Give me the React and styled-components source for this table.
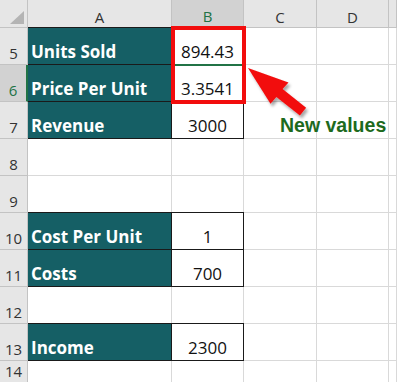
import React from "react";
import styled, { createGlobalStyle, css } from "styled-components";

const Global = createGlobalStyle`
  html, body { margin: 0; padding: 0; background: #ffffff; overflow: hidden; }
  body { font-family: "Open Sans", "Noto Sans", sans-serif; }
`;

const GRID = "#d9d9d9";
const HEAD_LINE = "#c3c3c3";
const HEAD_BG = "#e6e6e6";
const SEL_BG = "#d2d2d2";
const SEL_GREEN = "#217346";
const TEAL = "#155f65";
const INK = "#111111";

const Wrap = styled.div`
  position: relative;
  width: 397px;
  height: 382px;
  overflow: hidden;
`;

const Sheet = styled.div`
  display: grid;
  grid-template-columns: 28px 144px 72px 73px 72px 1fr;
  grid-template-rows: 28px repeat(9, 37px) 22px;
  width: 397px;
`;

const Corner = styled.div`
  position: relative;
  background: ${HEAD_BG};
  border-right: 1px solid ${HEAD_LINE};
  border-bottom: 1px solid ${HEAD_LINE};
  box-sizing: border-box;
  &::after {
    content: "";
    position: absolute;
    right: 3px;
    bottom: 3px;
    width: 0;
    height: 0;
    border-left: 14px solid transparent;
    border-bottom: 13px solid #b4b4b4;
  }
`;

const ColHead = styled.div`
  box-sizing: border-box;
  display: flex;
  align-items: flex-end;
  justify-content: center;
  padding-bottom: 0px;
  font-size: 15px;
  line-height: 20px;
  color: ${(p) => (p.$sel ? SEL_GREEN : "#333333")};
  background: ${(p) => (p.$sel ? SEL_BG : HEAD_BG)};
  border-right: 1px solid ${HEAD_LINE};
  border-bottom: ${(p) => (p.$sel ? `2px solid ${SEL_GREEN}` : `1px solid ${HEAD_LINE}`)};
`;

const RowHead = styled.div`
  box-sizing: border-box;
  display: flex;
  align-items: flex-end;
  justify-content: center;
  padding-bottom: 1px;
  font-size: 15px;
  line-height: 20px;
  color: ${(p) => (p.$sel ? SEL_GREEN : "#333333")};
  background: ${(p) => (p.$sel ? SEL_BG : HEAD_BG)};
  border-bottom: 1px solid ${HEAD_LINE};
  border-right: ${(p) => (p.$sel ? `2px solid ${SEL_GREEN}` : `1px solid ${HEAD_LINE}`)};
`;

const Cell = styled.div`
  box-sizing: border-box;
  display: flex;
  align-items: flex-end;
  justify-content: ${(p) => (p.$center ? "center" : "flex-start")};
  padding: 0 0 1px 3px;
  font-size: 17px;
  line-height: 23px;
  white-space: nowrap;
  overflow: visible;
  color: ${INK};
  background: #ffffff;
  border-right: 1px solid ${GRID};
  border-bottom: 1px solid ${GRID};
  ${(p) =>
    p.$label &&
    css`
      background: ${TEAL};
      color: #ffffff;
      font-weight: 700;
    `}
  ${(p) =>
    p.$center &&
    css`
      padding-left: 0;
    `}
  ${(p) =>
    p.$boxed &&
    css`
      border-right-color: #1a1a1a;
      border-bottom-color: #1a1a1a;
    `}
  ${(p) =>
    p.$top &&
    css`
      box-shadow: 0 -1px 0 #1a1a1a;
    `}
  ${(p) =>
    p.$sel &&
    css`
      box-shadow: 0 -1px 0 ${SEL_GREEN}, inset 0 1px 0 ${SEL_GREEN};
    `}
`;

const RedBox = styled.div`
  position: absolute;
  left: 171px;
  top: 26px;
  width: 75px;
  height: 78px;
  box-sizing: border-box;
  border: 4px solid #f20d0d;
  pointer-events: none;
`;

const ArrowSvg = styled.svg`
  position: absolute;
  left: 0;
  top: 0;
  width: 397px;
  height: 382px;
  pointer-events: none;
  overflow: visible;
`;

const Note = styled.div`
  position: absolute;
  left: 280px;
  top: 115px;
  font-family: "Liberation Sans", Arial, sans-serif;
  font-weight: 700;
  font-size: 19.5px;
  line-height: 20px;
  color: #1d6a1d;
  white-space: nowrap;
`;

const cols = ["A", "B", "C", "D", ""];

const rows = [
  { n: 5, label: "Units Sold", value: "894.43", top: true },
  { n: 6, label: "Price Per Unit", value: "3.3541", sel: true },
  { n: 7, label: "Revenue", value: "3000" },
  { n: 8 },
  { n: 9 },
  { n: 10, label: "Cost Per Unit", value: "1", top: true },
  { n: 11, label: "Costs", value: "700" },
  { n: 12 },
  { n: 13, label: "Income", value: "2300", top: true },
  { n: 14 },
];

export default function App() {
  return (
    <>
      <Global />
      <Wrap>
        <Sheet>
          <Corner />
          {cols.map((c, i) => (
            <ColHead key={i} $sel={c === "B"}>
              {c}
            </ColHead>
          ))}
          {rows.map((r) => (
            <React.Fragment key={r.n}>
              <RowHead $sel={r.sel}>{r.n}</RowHead>
              {r.label ? (
                <>
                  <Cell $label $boxed $top={r.top}>
                    {r.label}
                  </Cell>
                  <Cell $center $boxed $top={r.top} $sel={r.sel}>
                    {r.value}
                  </Cell>
                </>
              ) : (
                <>
                  <Cell />
                  <Cell />
                </>
              )}
              <Cell />
              <Cell />
              <Cell />
            </React.Fragment>
          ))}
        </Sheet>
        <RedBox />
        <ArrowSvg viewBox="0 0 397 382">
          <defs>
            <filter id="sh" x="-30%" y="-30%" width="160%" height="160%">
              <feDropShadow dx="2" dy="3" stdDeviation="1.6" floodColor="#000" floodOpacity="0.35" />
            </filter>
          </defs>
          <polygon
            points="248,68 288.5,82.5 282.6,89.1 306.1,107.7 299.9,115.5 276.4,96.9 270.5,103.8"
            fill="#f20d0d"
            filter="url(#sh)"
          />
        </ArrowSvg>
        <Note>New values</Note>
      </Wrap>
    </>
  );
}
